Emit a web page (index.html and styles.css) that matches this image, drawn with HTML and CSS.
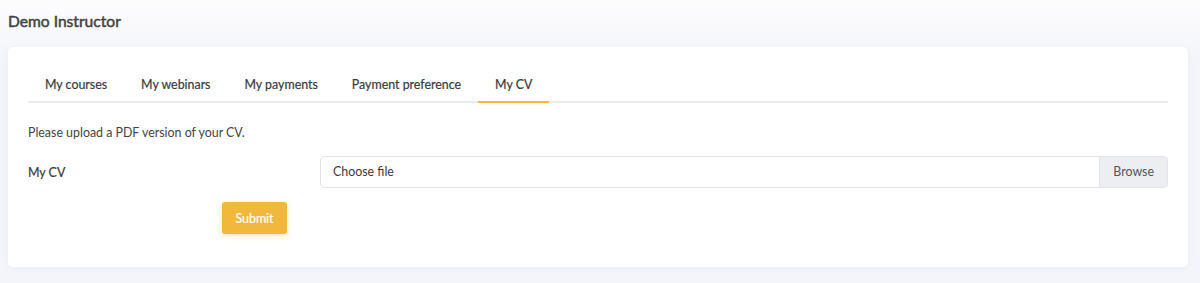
FILE: index.html
```html
<!DOCTYPE html>
<html lang="en">
<head>
    <meta charset="UTF-8">
    <meta name="viewport" content="width=device-width, initial-scale=1.0">
    <title>My CV</title>
    <link rel="stylesheet" href="styles.css">
</head>
<body>
    <h1 class="page-title">Demo Instructor</h1>

    <div class="card">
        <ul class="tabs">
            <li class="tab">My courses</li>
            <li class="tab">My webinars</li>
            <li class="tab">My payments</li>
            <li class="tab">Payment preference</li>
            <li class="tab active">My CV</li>
        </ul>

        <p class="hint">Please upload a PDF version of your CV.</p>

        <form class="cv-form">
            <div class="form-row">
                <label class="form-label">My CV</label>
                <div class="file-input">
                    <span class="file-name">Choose file</span>
                    <span class="file-browse">Browse</span>
                </div>
            </div>
            <div class="form-actions">
                <button type="button" class="submit-button">Submit</button>
            </div>
        </form>
    </div>
</body>
</html>
```

FILE: styles.css
```css
body {
    font-family: 'Lato', 'Noto Sans', sans-serif;
    margin: 0;
    padding: 0 12px 0 8px;
    background: linear-gradient(#fdfdfe 0, #f4f5fa 60px, #f4f5fa 100%);
    min-height: 283px;
    box-sizing: border-box;
    color: #3d3d3d;
}

.page-title {
    font-size: 15.6px;
    font-weight: 400;
    color: #444;
    -webkit-text-stroke: 0.5px #444;
    margin: 0;
    padding: 11px 0 0;
    height: 36px;
    line-height: 20px;
}

.card {
    background-color: white;
    border-radius: 5px;
    box-shadow: 0 0 8px rgba(30, 40, 90, 0.04);
    padding: 23px 20px 33px;
    height: 220px;
    box-sizing: border-box;
}

.tabs {
    list-style: none;
    margin: 0;
    padding: 0;
    display: flex;
    border-bottom: 2px solid #ececec;
}

.tab {
    font-size: 12.4px;
    color: #3a3a3a;
    padding: 7px 17px 8px;
    line-height: 16px;
    margin-bottom: -2px;
    border-bottom: 2px solid transparent;
    -webkit-text-stroke: 0.2px #3a3a3a;
}

.tab.active {
    border-bottom-color: #f2b83c;
}

.hint {
    font-size: 12.4px;
    color: #444;
    margin: 22px 0 0;
    line-height: 16px;
}

.cv-form {
    margin-top: 15px;
}

.form-row {
    display: grid;
    grid-template-columns: 292px 1fr;
    align-items: center;
}

.form-label {
    font-size: 12.4px;
    color: #3a3a3a;
    -webkit-text-stroke: 0.2px #3a3a3a;
}

.file-input {
    display: flex;
    height: 32px;
    border: 1px solid #e2e4e8;
    border-radius: 4px;
    box-sizing: border-box;
    overflow: hidden;
    font-size: 12.4px;
    color: #3a3a3a;
}

.file-name {
    flex: 1;
    padding: 0 12px;
    line-height: 30px;
}

.file-browse {
    background-color: #eceef1;
    border-left: 1px solid #e2e4e8;
    padding: 0 13px 0 13px;
    line-height: 30px;
    color: #555;
}

.form-actions {
    padding-left: 194px;
    margin-top: 14px;
}

.submit-button {
    font-family: inherit;
    background-color: #f2b83c;
    color: white;
    border: none;
    border-radius: 3px;
    height: 32px;
    width: 65px;
    padding: 0;
    font-size: 12.4px;
    -webkit-text-stroke: 0.2px white;
    box-shadow: 0 2px 6px rgba(242, 184, 60, 0.35);
    cursor: pointer;
}
```
